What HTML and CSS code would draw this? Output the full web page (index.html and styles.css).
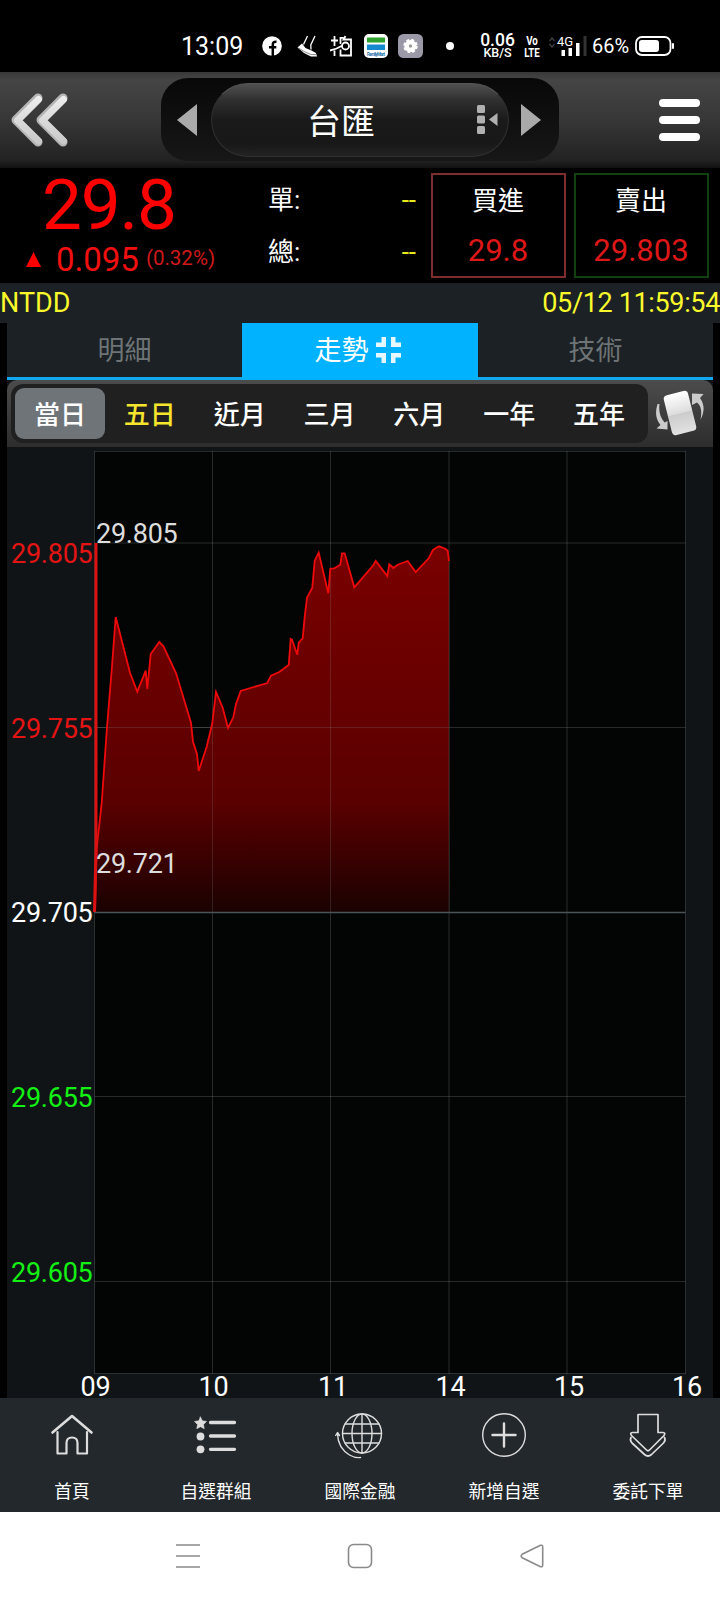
FILE: index.html
```html
<!DOCTYPE html>
<html lang="zh-Hant">
<head>
  <meta charset="UTF-8" />
  <title>台匯</title>
  <link rel="stylesheet" href="styles.css">
</head>
<body>

  <div class="status-bar">
    <span class="time">13:09</span>
    <svg width="20" height="20" viewBox="0 0 20 20"><circle cx="10" cy="10" r="9.8" fill="#fff"/><path d="M10.800 20V8.500Q10.800 5.300 14.500 5.700M7 11.300h7.300" fill="none" stroke="#000" stroke-width="2.500"/></svg>
    <svg width="21" height="22" viewBox="0 0 21 22"><path d="M.5 12.500 5 8.500l3.500 4.500 6 2.500 4.500 2.500 1 3.500-6 0-7-3.500z" fill="#fff"/><path d="M6.500 9.500 10.500 1M14 14.500 13.800 10 18 1" fill="none" stroke="#fff" stroke-width="1.300"/><path d="M1.500 13 8 17l6 2.500 5 .2" fill="none" stroke="#555" stroke-width=".7"/></svg>
    <svg width="23" height="22" viewBox="0 0 23 22" fill="none" stroke="#fff" stroke-width="1.800"><path d="M1 5.500h7M4.500 1v10M0 15.500q7-1.500 12.500-5M4.500 15.500v5.500M10.500 9V2.800h3M15.500 1 13.500 4.500h7.500v16H10.500V14.500"/><circle cx="15.500" cy="11" r="3.500"/></svg>
    <svg width="24" height="24" viewBox="0 0 24 24"><rect width="24" height="24" rx="5" fill="#fff"/><path fill="#2fa12e" d="M3 3.500h18v5H3z"/><path fill="#1688ce" d="M3 10.500h18V16H3z"/><text x="3" y="21.500" class="mart" textLength="18">FamilyMart</text></svg>
    <svg width="25" height="24" viewBox="0 0 25 24"><rect width="25" height="24" rx="5.500" fill="#9b98a8"/><circle cx="12.500" cy="12" r="5.800" fill="#fff" stroke="#fff" stroke-width="2.800" stroke-dasharray="2.700 1.855"/><circle cx="12.500" cy="12" r="6" fill="#fff"/><circle cx="12.500" cy="12" r="1.700" fill="#9b9a98"/></svg>
    <svg width="8" height="8"><circle cx="4" cy="4" r="4" fill="#fff"/></svg>
    <div class="speed"><b>0.06</b><span>KB/S</span></div>
    <div class="volte"><span>Vo</span><span>LTE</span></div>
    <svg class="signal" width="40" height="22" viewBox="0 0 40 22"><path d="m1.500 6 2.500-3 2.500 3M1.500 9 4 12l2.500-3" fill="none" stroke="#444" stroke-width="1.200"/><text x="9" y="10.500" class="net">4G</text><path d="M13.500 15h3.500v6h-3.500zM20.500 13H24v8h-3.500zM28 8h3.500v13H28z" fill="#fff"/><path d="M35.500 1h3v20h-3z" fill="#333"/></svg>
    <span class="percent">66%</span>
    <svg width="41" height="22" viewBox="0 0 41 22"><rect x="2" y="2" width="34.500" height="18" rx="6" fill="none" stroke="#fff" stroke-width="1.800"/><rect x="5" y="5" width="20" height="12" rx="3" fill="#fff"/><rect x="38" y="8" width="2" height="6" rx="1" fill="#fff"/></svg>
  </div>

  <header>
    <svg class="back" width="60" height="58" viewBox="0 0 60 58">
      <defs><linearGradient id="metal" x1="0" y1="0" x2="0" y2="58" gradientUnits="userSpaceOnUse"><stop offset="0" stop-color="#f2f2f2"/><stop offset="1" stop-color="#c4c4c4"/></linearGradient></defs>
      <g fill="none" stroke-linecap="round" stroke-linejoin="round"><path d="M28 7 6 29l22 22M53 7 31 29l22 22" stroke="#b4b4b4" stroke-width="9"/><path d="M28.500 8.500 7.500 29.500l21 20.500M53.500 8.500l-21 21 21 20.500" stroke="url(#metal)" stroke-width="7"/></g>
    </svg>
    <div class="switcher">
      <svg width="20" height="32" viewBox="0 0 20 32"><path d="M20 0v32L0 16z" fill="#aaa"/></svg>
      <div class="symbol">
        <span>台匯</span>
        <svg class="dots" width="21" height="30" viewBox="0 0 21 30" fill="#b0b0b0"><rect width="8" height="8" rx="1.500"/><rect y="10.500" width="8" height="8" rx="1.500"/><rect y="21" width="8" height="8" rx="1.500"/><path d="M20.500 8v13L12 14.500z"/></svg>
      </div>
      <svg width="20" height="32" viewBox="0 0 20 32"><path d="M0 0v32l20-16z" fill="#aaa"/></svg>
    </div>
    <div class="menu"><i></i><i></i><i></i></div>
  </header>

  <div class="quote">
    <div class="price">
      <div class="last">29.8</div>
      <div class="change"><svg width="15" height="15" viewBox="0 0 15 15"><path d="M7.500 0 15 15H0z" fill="red"/></svg><span class="diff">0.095</span><span class="rate">(0.32%)</span></div>
    </div>
    <div class="volume">
      <div><span>單:</span><span class="none">--</span></div>
      <div><span>總:</span><span class="none">--</span></div>
    </div>
    <div class="deal buy"><span>買進</span><b>29.8</b></div>
    <div class="deal sell"><span>賣出</span><b>29.803</b></div>
  </div>

  <div class="info"><span>NTDD</span><span class="date">05/12 11:59:54</span></div>

  <main>
    <div class="tabs">
      <div class="tab">明細</div>
      <div class="tab active">走勢<svg width="25" height="26" viewBox="0 0 25 26" fill="#e6f8ff"><path d="M5.500 0H10v10H0V5.500h5.500zM15 0h4.500v5.500H25V10H15zM0 16h10v10H5.500v-5.500H0zM15 16h10v4.500h-5.500V26H15z"/></svg></div>
      <div class="tab">技術</div>
    </div>

    <div class="periods">
      <div class="period-list">
        <span class="selected">當日</span>
        <span class="hot">五日</span>
        <span>近月</span>
        <span>三月</span>
        <span>六月</span>
        <span>一年</span>
        <span>五年</span>
      </div>
      <svg class="rotate" width="50" height="46" viewBox="0 0 50 46">
        <defs><linearGradient id="card" x1="0" y1="0" x2="0" y2="1"><stop offset="0" stop-color="#fff"/><stop offset=".5" stop-color="#ddd"/><stop offset=".52" stop-color="#ccc"/><stop offset="1" stop-color="#e2e2e2"/></linearGradient></defs>
        <rect x="12.500" y="2.500" width="25" height="41" rx="4" transform="rotate(-14 25 23)" fill="url(#card)"/>
        <path d="M2.500 14Q-1.500 27 5.500 35L1.500 38.500 12.500 39.500V31L9.500 32.500Q3 25 4.500 14zM45.500 30q2.500-13-3.500-17.500L37 15V3.500L48.500 4 45 8Q52 18 45.500 30z" fill="#ccc"/>
      </svg>
    </div>

    <!-- 走勢圖 -->
    <svg class="chart" width="706" height="951" viewBox="7 447 706 951">
      <defs>
        <linearGradient id="area" gradientUnits="userSpaceOnUse" x1="0" y1="543" x2="0" y2="912">
          <stop offset="0" stop-color="#7a0000"/>
          <stop offset=".7" stop-color="#5a0000"/>
          <stop offset=".79" stop-color="#480000"/>
          <stop offset="1" stop-color="#1a0202"/>
        </linearGradient>
      </defs>
      <rect x="94.500" y="451" width="591" height="922.500" fill="#030504"/>
      <path class="grid" d="M94.500 451.500h591M94.500 543h591M94.500 727.500h591M94.500 1096.500h591M94.500 1281.500h591M94.500 1373.500h591M94.500 451v923M212.500 451v923M330.500 451v923M449 451v923M567 451v923M685.500 451v923"/>
      <polygon fill="url(#area)" points="95,912 96.700,848 101.700,803 107,727 111.700,670 115.700,617 130,672.700 137.300,691.700 145.700,670.700 147.300,689 150.700,654 159.300,642 163.300,646 176,673 191,722.700 193,741.700 197,754 198.700,771 206.700,746.700 212.300,723 216,692 222.700,707.700 228,728 233.300,717.300 236,704 240.700,691 267.300,683 271,675.700 279.300,672 288.700,665 290.700,639 292,639.700 297.300,654.700 298.700,642.700 302.700,638.300 304.700,616.700 307,597.700 312.300,587.700 314.700,560.700 318.700,552.700 328.300,593.300 330.300,568.700 334.300,568.300 340.300,564.700 342,553.300 344.700,553.300 354.300,587.300 373.300,565.300 375.700,561 387.300,576 389.300,564.300 393.300,568 397.700,564.700 407.700,561 415.700,572 428.700,558.300 433,550 439,546.300 445.300,548.700 447.700,550.700 449,561 449,912"/>
      <path class="grid over" d="M94.500 727.500h354M212.500 723v189M330.500 570v342M449 561v351"/>
      <path class="base" d="M94.500 912.500h591"/>
      <polyline class="line" points="95,912 96.700,848 101.700,803 107,727 111.700,670 115.700,617 130,672.700 137.300,691.700 145.700,670.700 147.300,689 150.700,654 159.300,642 163.300,646 176,673 191,722.700 193,741.700 197,754 198.700,771 206.700,746.700 212.300,723 216,692 222.700,707.700 228,728 233.300,717.300 236,704 240.700,691 267.300,683 271,675.700 279.300,672 288.700,665 290.700,639 292,639.700 297.300,654.700 298.700,642.700 302.700,638.300 304.700,616.700 307,597.700 312.300,587.700 314.700,560.700 318.700,552.700 328.300,593.300 330.300,568.700 334.300,568.300 340.300,564.700 342,553.300 344.700,553.300 354.300,587.300 373.300,565.300 375.700,561 387.300,576 389.300,564.300 393.300,568 397.700,564.700 407.700,561 415.700,572 428.700,558.300 433,550 439,546.300 445.300,548.700 447.700,550.700 449,561"/>
      <path class="range" d="M96 543v305l-1.500 64"/>

      <g class="y-axis">
        <text x="92.500" y="562.500" fill="#e41414">29.805</text>
        <text x="92.500" y="737.500" fill="#e41414">29.755</text>
        <text x="92.500" y="922" fill="#fff">29.705</text>
        <text x="92.500" y="1106.500" fill="#14f014">29.655</text>
        <text x="92.500" y="1282" fill="#14f014">29.605</text>
      </g>
      <g class="marks">
        <text x="96" y="543">29.805</text>
        <text x="96" y="873">29.721</text>
      </g>
      <g class="x-axis">
        <text x="95.500" y="1395.500">09</text>
        <text x="213.500" y="1395.500">10</text>
        <text x="333" y="1395.500">11</text>
        <text x="450.500" y="1395.500">14</text>
        <text x="569" y="1395.500">15</text>
        <text x="687" y="1395.500">16</text>
      </g>
    </svg>
  </main>

  <nav class="bottom-nav">
    <div>
      <svg width="44" height="48" viewBox="0 0 44 48"><path d="M2.500 21.500 22 5l19.500 16.500" stroke-width="2.600"/><path d="M7.500 21v21.500h9V32q0-5.500 5.500-5.500t5.500 5.500v10.500h9.500V21" stroke-width="2.200"/></svg>
      <span>首頁</span>
    </div>
    <div>
      <svg width="44" height="48" viewBox="0 0 44 48"><path d="m6.500 6 1.800 3.800 4.200.6-3 3 .7 4.300-3.700-2-3.700 2 .7-4.300-3-3 4.200-.6z" fill="#ddd" stroke-width=".6"/><circle cx="6.500" cy="25.500" r="3.900" fill="#ddd" stroke="none"/><circle cx="6.500" cy="38.300" r="3.900" fill="#ddd" stroke="none"/><path d="M16.500 11.500h24M16.500 25h24M16.500 38.300h24" stroke-width="3.300"/></svg>
      <span>自選群組</span>
    </div>
    <div>
      <svg width="48" height="50" viewBox="0 0 48 50"><circle cx="26" cy="23.500" r="19.500"/><ellipse cx="26" cy="23.500" rx="10" ry="19.500"/><path d="M26 4v39M6.500 23.500h39M9 14h34M9 33h34M1.500 24Q2 38 13.500 45q5.500 3.200 11 2.500M-.3 25.500 1.500 22.500l2 3"/></svg>
      <span>國際金融</span>
    </div>
    <div>
      <svg width="46" height="48" viewBox="0 0 46 48"><circle cx="23" cy="24" r="21.300"/><path d="M11.500 24h23M23 12.500v23" stroke-width="2.400"/></svg>
      <span>新增自選</span>
    </div>
    <div>
      <svg width="44" height="48" viewBox="0 0 44 48"><path d="M12 3.500h20v18h5q3 .2 1 3L23.500 39q-1.500 1.500-3 0L5.500 24.500q-2-2.800 1-3H12zM5 26.500q-1.500 3 1 5.500l12.500 11.500q3.500 3 7 0L37.500 32q2.500-2.500 1-5.500" stroke-width="1.700"/></svg>
      <span>委託下單</span>
    </div>
  </nav>

  <div class="system-nav">
    <svg width="24" height="26" viewBox="0 0 24 26"><path d="M0 2h24M0 13h24M0 24h24"/></svg>
    <svg width="26" height="26" viewBox="0 0 26 26"><rect x="1.500" y="1.500" width="23" height="23" rx="5"/></svg>
    <svg width="24" height="26" viewBox="0 0 24 26"><path d="M20.500 2.300 2.200 11.300q-2.200 1.700 0 3.400l18.300 9q2.200.6 2.200-1.700V4q0-2.300-2.200-1.700z"/></svg>
  </div>

</body>
</html>
```
FILE: styles.css
```css
body {
  font-family: Roboto, "Noto Sans CJK TC", sans-serif;
  background: #000;
  color: #fff;
  margin: 0;
  width: 720px;
}

svg {
  display: block;
}

/* status bar */
.status-bar {
  display: grid;
  grid-template-columns: 80px 35px 33px 34px 34px 48px 34px 43px 25px 44px 42px 42px;
  align-items: center;
  height: 72px;
  padding: 20px 0 0 182px;
  box-sizing: border-box;
}

.time {
  margin-left: -1px;
  font-size: 25px;
}

.mart {
  font-size: 4.5px;
  font-weight: bold;
  fill: #1c6fa8;
}

.speed,
.volte {
  display: flex;
  flex-direction: column;
  align-items: center;
}

.speed {
  width: 35px;
  font-size: 12.5px;
  font-weight: 500;
  line-height: 12px;
}

.speed b {
  font-size: 17.5px;
  font-weight: 500;
  line-height: 13px;
}

.volte {
  width: 20px;
  margin-left: -1px;
  font-size: 13.5px;
  font-weight: bold;
  line-height: 12px;
  transform: scaleX(0.72);
}

.signal {
  overflow: visible;
}

.net {
  font-size: 13px;
  fill: #fff;
}

.percent {
  font-size: 20px;
}

/* header */
header {
  display: flex;
  align-items: center;
  height: 96px;
  padding: 0 20px 0 10px;
  box-sizing: border-box;
  background: linear-gradient(#383838 0, #454545 8px, #383838 45px, #232323 88px, #111 96px);
}

.switcher {
  display: flex;
  align-items: center;
  justify-content: space-between;
  width: 398px;
  height: 83px;
  margin: -1px 0 0 91px;
  padding: 0 18px 0 16px;
  box-sizing: border-box;
  border-radius: 27px;
  background: linear-gradient(#080808, #171717);
}

.symbol {
  display: flex;
  align-items: center;
  justify-content: flex-end;
  width: 298px;
  height: 74px;
  margin: 0 -4px 0 -2px;
  padding: 0 10px 0 0;
  box-sizing: border-box;
  border-radius: 37px;
  border: 1px solid #303030;
  border-top-color: #555;
  font-size: 34px;
  background: linear-gradient(#505050 0, #303030 16px, #1a1a1a 36px, #181818 60px, #252525 74px);
}

.dots {
  margin-left: 102px;
}

.menu {
  display: flex;
  flex-direction: column;
  gap: 9px;
  margin-left: auto;
}

.menu i {
  width: 41px;
  height: 8px;
  border-radius: 4px;
  background: #fff;
}

/* quote */
.quote {
  display: flex;
  height: 115px;
}

.price {
  width: 268px;
  color: #f00;
}

.last {
  height: 70px;
  padding-left: 42px;
  font-size: 71px;
  line-height: 73px;
  letter-spacing: -1.2px;
}

.change {
  display: flex;
  align-items: center;
  padding-left: 26px;
  height: 43px;
}

.diff {
  margin-left: 15px;
  font-size: 33px;
  line-height: 38px;
  color: #f01010;
}

.rate {
  margin: -4px 0 0 7px;
  font-size: 20.5px;
  color: #d01919;
}

.volume {
  width: 148px;
  padding-top: 6px;
}

.volume div {
  display: flex;
  justify-content: space-between;
  height: 52px;
  line-height: 52px;
  font-size: 26px;
}

.none {
  color: #e9e91c;
}

.deal {
  display: flex;
  flex-direction: column;
  align-items: center;
  width: 135px;
  height: 105px;
  margin-top: 5px;
  padding-top: 1px;
  box-sizing: border-box;
  font-size: 26px;
  line-height: 50px;
}

.deal b {
  font-size: 31px;
  font-weight: normal;
  color: #dc1717;
}

.buy {
  margin-left: 14.5px;
  border: 2px solid #7c2d2d;
}

.sell {
  margin-left: 8px;
  border: 2px solid #114011;
}

.info {
  display: flex;
  justify-content: space-between;
  height: 40px;
  line-height: 40px;
  font-size: 27px;
  color: #f9f92c;
  background: #1b2124;
}

.date {
  letter-spacing: -0.35px;
}

/* chart page */
main {
  width: 706px;
  margin-left: 7px;
  background: #101417;
}

.tabs {
  display: flex;
  height: 57px;
  border-bottom: 3px solid #10a8ef;
  box-sizing: border-box;
  background: #1b2124;
}

.tab {
  width: 235px;
  display: flex;
  justify-content: center;
  height: 57px;
  line-height: 57px;
  font-size: 27px;
  color: #6e7476;
}

.tab.active {
  width: 236px;
  padding-right: 5px;
  box-sizing: border-box;
  color: #fff;
  background: #00b2ff;
}

.tab svg {
  margin: 14px 0 0 7px;
}

.periods {
  display: flex;
  height: 67px;
  box-sizing: border-box;
  padding: 4px 0 4px 4px;
  border-radius: 10px 10px 0 0;
  background: linear-gradient(#4c4c4c, #2d2d2d);
}

.period-list {
  display: flex;
  width: 637px;
  height: 59px;
  padding: 4px;
  box-sizing: border-box;
  border-radius: 12px;
  background: #202020;
}

.period-list span {
  width: 90px;
  height: 51px;
  line-height: 54px;
  text-align: center;
  font-size: 26px;
  font-weight: 500;
}

.period-list .selected {
  border-radius: 9px;
  background: #6f7479;
}

.period-list .hot {
  color: #f5e52c;
}

.rotate {
  margin: 6px 0 0 7px;
}

.chart {
  overflow: visible;
}

.grid {
  fill: none;
  stroke: #8fa09a;
  stroke-opacity: 0.25;
}

.over {
  stroke-opacity: 0.2;
}

.base {
  stroke: #4a5459;
  stroke-width: 1.3;
}

.line {
  fill: none;
  stroke: #ee0a0a;
  stroke-width: 1.8;
}

.range {
  fill: none;
  stroke: #dc1212;
  stroke-width: 3;
}

.chart text {
  font-size: 27px;
  letter-spacing: -0.25px;
}

.y-axis {
  text-anchor: end;
}

.marks {
  fill: #ddd;
}

.x-axis {
  fill: #fff;
  text-anchor: middle;
}

/* bottom navigation */
.bottom-nav {
  display: flex;
  height: 114px;
  background: #23282c;
}

.bottom-nav div {
  flex: 1;
  display: flex;
  flex-direction: column;
  align-items: center;
  padding-top: 12px;
}

.bottom-nav svg {
  height: 50px;
  fill: none;
  stroke: #ddd;
  stroke-width: 1.4;
  stroke-linecap: round;
  stroke-linejoin: round;
  overflow: visible;
}

.bottom-nav span {
  margin-top: 18px;
  font-size: 17.7px;
  line-height: 28px;
}

.system-nav {
  display: flex;
  justify-content: space-between;
  align-items: center;
  height: 88px;
  padding: 0 176px;
  box-sizing: border-box;
  background: #fff;
}

.system-nav svg {
  fill: none;
  stroke: #8a8a8a;
  stroke-width: 1.6;
}
```
